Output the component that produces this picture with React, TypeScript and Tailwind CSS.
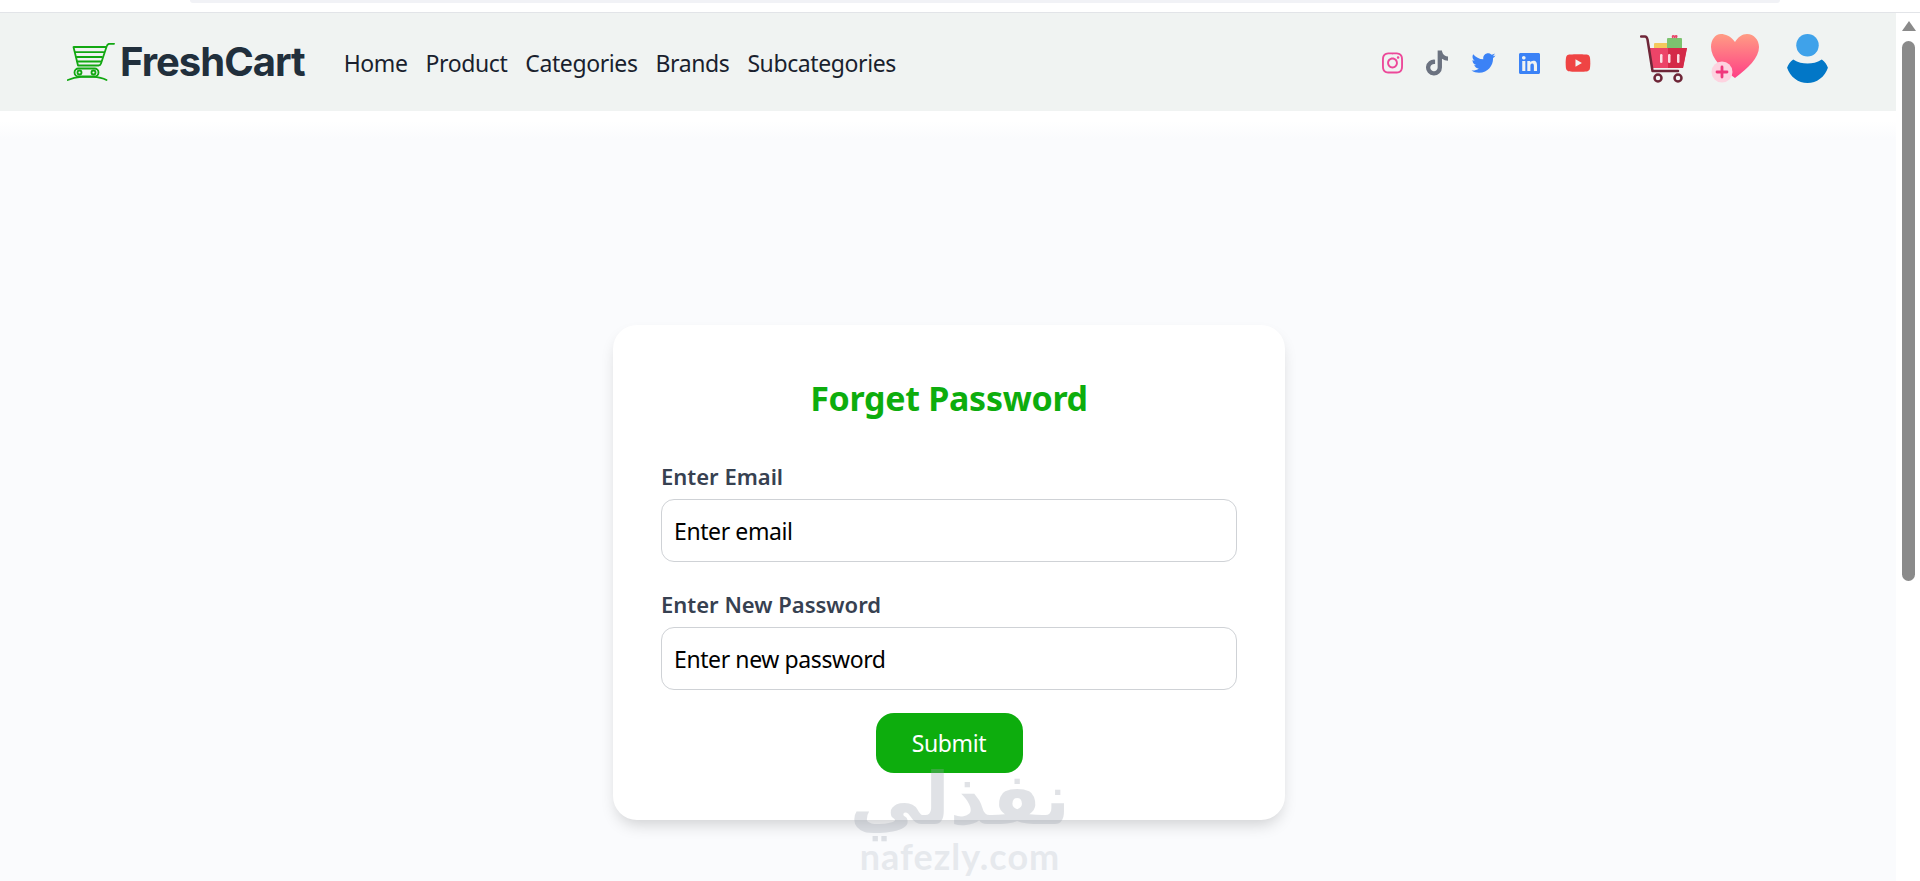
import { FaInstagram, FaTiktok, FaTwitter, FaLinkedin, FaYoutube } from "react-icons/fa";

function LogoCart() {
  return (
    <svg width="48" height="38" viewBox="0 0 48 38" fill="none" stroke="#12a812" strokeWidth="1.800" strokeLinecap="round" strokeLinejoin="round">
      <path d="M47 .8H42.500C41 .8 40.300 1.300 39.800 3L34 20.500C33.500 22 33 22.500 31.500 22.500H11L6.500 4H38.500" />
      <path d="M8 9.200H36.500M9.500 14H35M10.500 18.500H33.500" />
      <rect x="7.500" y="25.500" width="24" height="8" rx="4" />
      <circle cx="12.500" cy="29.500" r="2" />
      <circle cx="26.500" cy="29.500" r="2" />
      <path d="M.8 37C5 35 9 34 14 33.800H26C32 34 36 35 39.500 37" />
    </svg>
  );
}

function CartIcon() {
  return (
    <svg width="47" height="48" viewBox="0 0 47 48">
      <rect x="14" y="8" width="15" height="6" rx="1" fill="#f4c95d" />
      <rect x="27" y="3" width="15" height="11" rx="1" fill="#7cc36f" />
      <path d="M33 3c-2-3 2-3 1.500 0c0-3 4-3 1.500 0" fill="none" stroke="#e8476a" strokeWidth="1.500" />
      <path d="M8 13H47L43 33H12Z" fill="#ec4468" />
      <path d="M28 13H47L43 33H28Z" fill="#d42a48" />
      <path d="M1 1.500H5C6.500 1.500 7 2.500 7.500 4.500L12.500 36H38" fill="none" stroke="#6e2638" strokeWidth="2.500" strokeLinecap="round" strokeLinejoin="round" />
      <rect x="20" y="19" width="2.500" height="9" rx="1.200" fill="#fbdde3" />
      <rect x="28" y="19" width="2.500" height="9" rx="1.200" fill="#fbdde3" />
      <rect x="37" y="19" width="2.500" height="9" rx="1.200" fill="#fbdde3" />
      <circle cx="18" cy="43" r="3.500" fill="#f3f4f6" stroke="#6e2638" strokeWidth="2.500" />
      <circle cx="38" cy="43" r="3.500" fill="#f3f4f6" stroke="#6e2638" strokeWidth="2.500" />
    </svg>
  );
}

function HeartIcon() {
  return (
    <svg width="48" height="49" viewBox="0 0 48 49">
      <defs>
        <linearGradient id="hg" x1="0" y1="0" x2="0" y2="1">
          <stop offset="0" stopColor="#ff9c84" />
          <stop offset="1" stopColor="#ff3f86" />
        </linearGradient>
      </defs>
      <path d="M24 8C20 2 14 0 10 0C4 0 0 6 0 13C0 24 11 35 24 44C37 34 48 24 48 13C48 6 43 0 36 0C31 0 27 3 24 8Z" fill="url(#hg)" />
      <circle cx="11" cy="38" r="10.500" fill="#fdd3e0" />
      <path d="M11 33V43M6 38H16" stroke="#f0387c" strokeWidth="2.800" strokeLinecap="round" />
    </svg>
  );
}

function UserIcon() {
  return (
    <svg width="41" height="49" viewBox="0 0 40 48">
      <circle cx="20" cy="11" r="11" fill="#3fa2ea" />
      <path d="M6 25C11 28 15 29 20 29C25 29 29 28 34 25C37 27 39 30 40 33C37 42 29 48 20 48C11 48 3 42 0 33C1 30 3 27 6 25Z" fill="#0277c7" />
    </svg>
  );
}

function Field({ label, placeholder, type }: { label: string; placeholder: string; type: string }) {
  return (
    <div className="flex flex-col">
      <label className="mb-[8px] text-[22px] leading-[30px] font-semibold text-[#374151]">{label}</label>
      <input
        type={type}
        placeholder={placeholder}
        className="h-[63px] w-full rounded-[13px] border border-[#cfd2d6] bg-white px-[12px] text-[23px] tracking-[-0.4px] text-black placeholder:text-black outline-none"
      />
    </div>
  );
}

export default function App() {
  const links = ["Home", "Product", "Categories", "Brands", "Subcategories"];
  return (
    <div className="flex h-[881px] flex-col overflow-hidden bg-white font-['Noto_Sans',sans-serif]">
      <div className="h-[13px] shrink-0 border-b border-[#e2e4e8] pl-[190px] pr-[140px]">
        <div className="h-[3px] rounded-b-full bg-[#f1f2f6]" />
      </div>
      <div className="flex min-h-0 flex-1">
        <div className="relative flex min-w-0 flex-1 flex-col">
          <nav className="flex h-[98px] shrink-0 items-center bg-[#f0f3f2] pl-[67px] pr-[68px]">
            <div className="flex items-center gap-[5px]">
              <LogoCart />
              <span className="font-['Inter',sans-serif] text-[40px] font-bold tracking-[-1px] text-[#212f3c]">FreshCart</span>
            </div>
            <ul className="ml-[39px] mt-[2px] flex gap-[18px] text-[23px] tracking-[-0.4px] text-[#1a1f2e]">
              {links.map((l) => (
                <li key={l}>{l}</li>
              ))}
            </ul>
            <div className="ml-auto flex items-center gap-[49px]">
              <div className="mt-[2px] flex items-center gap-[23px]">
                <FaInstagram className="h-[24px] w-[21px] text-[#ec4899]" />
                <FaTiktok className="h-[26px] w-[22px] text-[#6b7280]" />
                <FaTwitter className="h-[24px] w-[25px] text-[#3b82f6]" />
                <FaLinkedin className="h-[25px] w-[21px] text-[#3b82f6]" />
                <FaYoutube className="ml-[2px] h-[26px] w-[26px] text-[#ef4444]" />
              </div>
              <div className="mb-[7px] flex items-center gap-[24px]">
                <CartIcon />
                <HeartIcon />
                <div className="ml-[4px]"><UserIcon /></div>
              </div>
            </div>
          </nav>
          <main className="flex flex-1 justify-center bg-[linear-gradient(#ffffff_0,#ffffff_10px,#fafbfd_28px)] pl-[2px] pt-[214px]">
            <form className="flex h-[495px] w-[672px] flex-col rounded-[24px] bg-white px-[48px] pt-[50px] shadow-[0_8px_16px_-4px_rgba(0,0,0,0.18)]">
              <h2 className="mb-[40px] text-center text-[34px] leading-[46px] font-bold tracking-[-0.3px] text-[#0dad0d]">Forget Password</h2>
              <div className="flex flex-col gap-[27px]">
                <Field label="Enter Email" placeholder="Enter email" type="email" />
                <Field label="Enter New Password" placeholder="Enter new password" type="password" />
              </div>
              <button type="button" className="mx-auto mt-[23px] h-[60px] w-[147px] rounded-[18px] bg-[#0dad0d] text-[23px] tracking-[-0.4px] text-white">Submit</button>
            </form>
          </main>
          <div className="pointer-events-none absolute left-[840px] top-[747px] flex w-[240px] flex-col items-center text-[#9ca3af]">
            <span dir="rtl" className="font-['DejaVu_Sans',sans-serif] text-[72px] leading-[78px] font-bold opacity-30">نفذلي</span>
            <span className="font-['Lato',sans-serif] text-[36px] leading-[36px] font-bold tracking-[1px] opacity-20">nafezly.com</span>
          </div>
        </div>
        <aside className="flex w-[24px] shrink-0 flex-col items-center bg-white pl-[1px] pt-[8px]">
          <div className="h-0 w-0 border-x-[7px] border-b-[10px] border-x-transparent border-b-[#8a8a8a]" />
          <div className="mt-[10px] h-[540px] w-[13px] rounded-full bg-[#8a8a8a]" />
        </aside>
      </div>
    </div>
  );
}
